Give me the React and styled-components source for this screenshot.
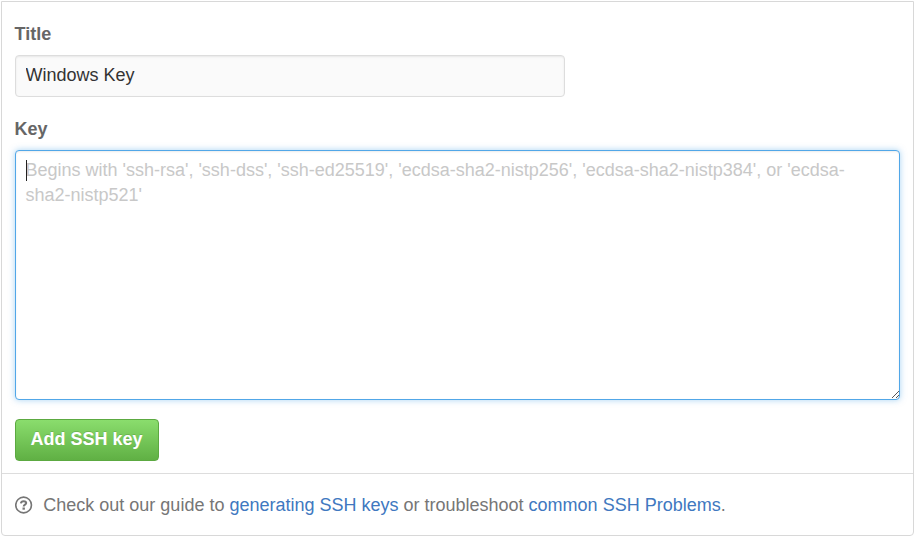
import React from "react";
import styled, { createGlobalStyle } from "styled-components";

const GlobalStyle = createGlobalStyle`
  * { box-sizing: border-box; }
  body {
    margin: 0;
    background: #fff;
    overflow: hidden;
    font-family: "Liberation Sans", Arial, sans-serif;
    font-size: 18px;
    color: #333;
  }
`;

const Panel = styled.section`
  display: flex;
  flex-direction: column;
  width: 913px;
  height: 535px;
  margin: 1px 0 0 1px;
  border: 1px solid #d8d8d8;
  border-radius: 0 0 4px 4px;
  background: #fff;
`;

const Form = styled.form`
  display: flex;
  flex-direction: column;
  align-items: flex-start;
  height: 471px;
  padding: 19px 13px 0;
`;

const Label = styled.label`
  display: block;
  height: 26px;
  margin: 0 0 8px -0.4px;
  line-height: 26px;
  font-weight: bold;
  color: #666;
`;

const TitleInput = styled.input`
  display: block;
  width: 550px;
  height: 42px;
  margin: 0 0 19px;
  padding: 0 9.5px 2px;
  border: 1px solid #ddd;
  border-radius: 4px;
  background: #fafafa;
  box-shadow: inset 0 1px 2px rgba(0, 0, 0, 0.075);
  font: inherit;
  color: #333;
  outline: none;
`;

const KeyField = styled.div`
  position: relative;
  width: 885px;
  height: 250px;
  margin-bottom: 19px;
`;

const KeyTextarea = styled.textarea`
  display: block;
  width: 100%;
  height: 100%;
  margin: 0;
  padding: 7px 9.5px;
  border: 1px solid #51a7e8;
  border-radius: 4px;
  background: #fff;
  box-shadow: inset 0 1px 2px rgba(0, 0, 0, 0.075), 0 0 6px rgba(81, 167, 232, 0.5);
  font: inherit;
  line-height: 25px;
  outline: none;
  resize: none;

  &::placeholder {
    color: #c8c8c8;
    opacity: 1;
  }
`;

const Caret = styled.span`
  position: absolute;
  top: 10px;
  left: 11px;
  width: 1px;
  height: 21px;
  background: #222;
  pointer-events: none;
`;

const ResizeGrip = styled.svg`
  position: absolute;
  right: 1px;
  bottom: 2px;
  width: 7px;
  height: 7px;
  fill: #555;
`;

const SubmitButton = styled.button`
  width: 144px;
  height: 42px;
  padding: 0 1px 2px 0;
  border: 1px solid #5ca941;
  border-radius: 4px;
  background: linear-gradient(#8add6d, #60b044);
  font: inherit;
  font-weight: bold;
  white-space: nowrap;
  color: #fff;
  text-shadow: 0 -1px 0 rgba(0, 0, 0, 0.15);
`;

const Footer = styled.footer`
  display: flex;
  flex: 1;
  align-items: center;
  gap: 10.3px;
  padding: 0 13px;
  border-top: 1px solid #ddd;
  color: #767676;
`;

const QuestionIcon = styled.svg`
  width: 18px;
  height: 18px;
  fill: none;
  stroke: currentColor;
`;

const HelpText = styled.p`
  margin: 0;
  line-height: 26px;
`;

const Link = styled.a`
  color: #4078c0;
  text-decoration: none;
`;

const gripDots = [
  [0, 6], [1, 5], [2, 4], [3, 3], [4, 2], [5, 1], [6, 0],
  [4, 6], [5, 5], [6, 4],
];

export default function App() {
  return (
    <>
      <GlobalStyle />
      <Panel>
        <Form>
          <Label htmlFor="title">Title</Label>
          <TitleInput id="title" defaultValue="Windows Key" />
          <Label htmlFor="key">Key</Label>
          <KeyField>
            <KeyTextarea
              id="key"
              spellCheck={false}
              placeholder="Begins with 'ssh-rsa', 'ssh-dss', 'ssh-ed25519', 'ecdsa-sha2-nistp256', 'ecdsa-sha2-nistp384', or 'ecdsa-sha2-nistp521'"
            />
            <Caret />
            <ResizeGrip viewBox="0 0 7 7" aria-hidden="true">
              {gripDots.map(([x, y]) => (
                <rect key={`${x}-${y}`} x={x} y={y} width="1" height="1" />
              ))}
            </ResizeGrip>
          </KeyField>
          <SubmitButton type="button">Add SSH key</SubmitButton>
        </Form>
        <Footer>
          <QuestionIcon viewBox="0 0 18 18" aria-hidden="true">
            <circle cx="8.6" cy="9" r="7.85" strokeWidth="1.6" />
            <path d="M5.9 7.4C6.1 5.9 7.1 5.2 8.6 5.2C10.2 5.2 11.2 6 11.2 7.1C11.2 8.7 8.7 8.6 8.7 10.5" strokeWidth="2" />
            <path d="M8.7 11.5V13.7" strokeWidth="2.4" />
          </QuestionIcon>
          <HelpText>
            Check out our guide to <Link href="#generating">generating SSH keys</Link> or troubleshoot{" "}
            <Link href="#problems">common SSH Problems</Link>.
          </HelpText>
        </Footer>
      </Panel>
    </>
  );
}
